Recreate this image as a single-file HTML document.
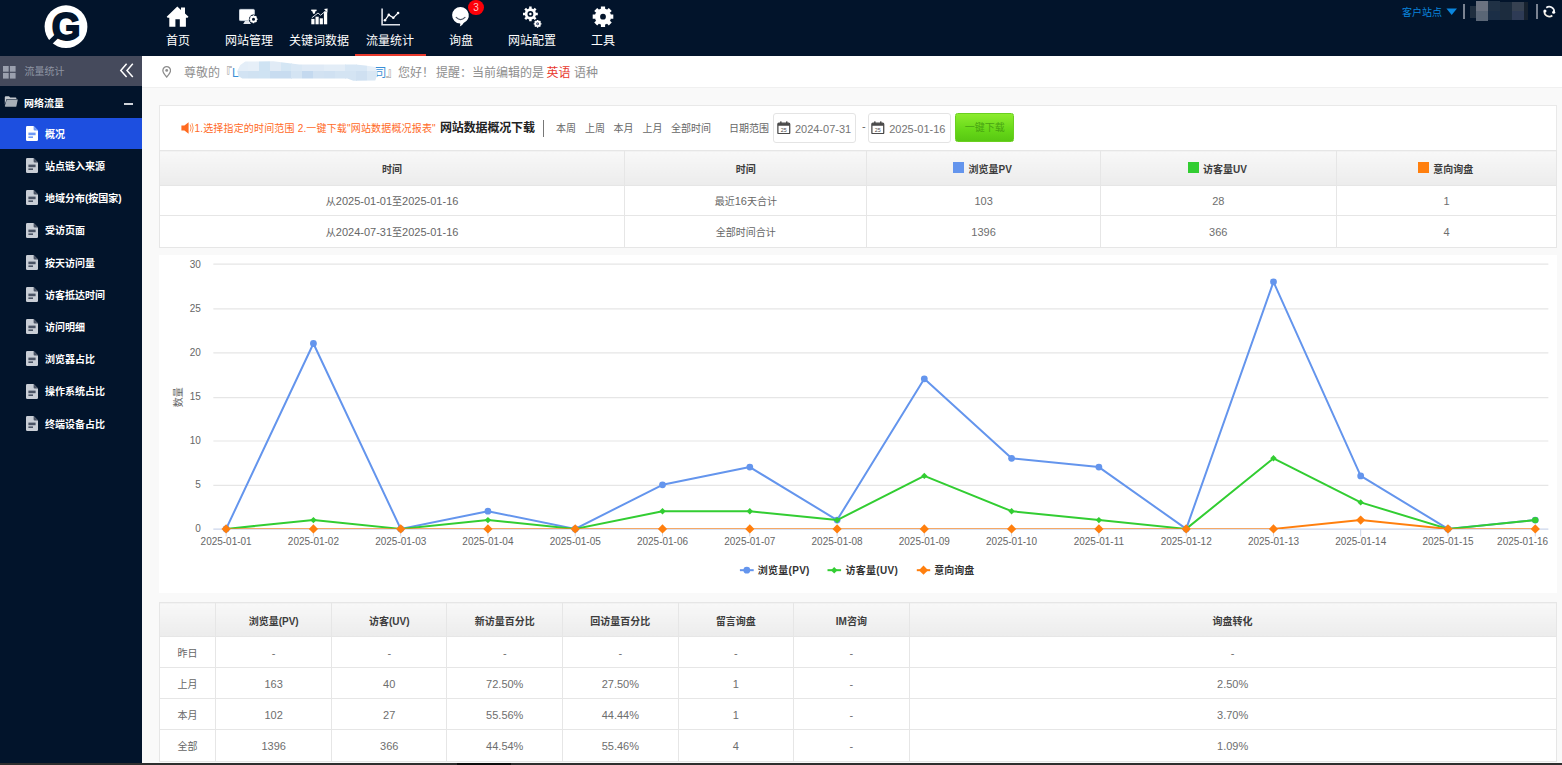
<!DOCTYPE html>
<html lang="zh-CN">
<head>
<meta charset="utf-8">
<title>流量统计 - 概况</title>
<style>
*{box-sizing:border-box;margin:0;padding:0}
html,body{width:1562px;height:765px;overflow:hidden}
body{position:relative;background:#f9f9f9;font-family:"Liberation Sans","Noto Sans CJK SC",sans-serif;font-size:10px;color:#666}
.abs{position:absolute}
#top{position:absolute;left:0;top:0;width:1562px;height:56px;background:#02142b}
#side{position:absolute;left:0;top:56px;width:142px;height:709px;background:#02142b}
#sidehead{position:absolute;left:0;top:0;width:142px;height:30.3px;background:#454a5c}
.nav{position:absolute;top:0;height:56px;color:#fff;font-size:12px;text-align:center;white-space:nowrap}
.nav span{position:absolute;left:50%;transform:translateX(-50%);top:32.8px;line-height:16px}
.nav svg{position:absolute}
.sitem{position:absolute;left:0;width:142px;height:31px;color:#fff;font-size:10px;font-weight:bold}
.sitem span{position:absolute;left:45px;top:0.4px;line-height:31px;white-space:nowrap}
.sitem svg{position:absolute;left:25.5px;top:7.5px}
.sitem.on{background:#1d4fe0}
.sitem.on span{top:1px}
.sitem.on svg{top:8.1px}
#crumb{position:absolute;left:142px;top:56px;width:1420px;height:32px;background:#fff;border-bottom:1px solid #f0f0f0;color:#8e8e8e;font-size:12px}
#crumb span{position:absolute;top:1px;line-height:32px;white-space:nowrap}
#panel{position:absolute;left:159px;top:105px;width:1397.5px;height:142.2px;background:#fff;border:1px solid #e9e9e9}

#pw span{position:absolute;white-space:nowrap;line-height:14px}
.tb{position:absolute;left:0;border-collapse:collapse;table-layout:fixed}
.tb td,.tb th{border:1px solid #e6e6e6;text-align:center;vertical-align:middle;padding:0;font-weight:normal;color:#666;overflow:hidden;white-space:nowrap}
.tb th{font-weight:bold;color:#3d3d3d;background:linear-gradient(#f8f8f8,#ececec);font-size:10px}
.tb td{font-size:10px;background:#fff}
.tb .n{font-size:11px}
.tb td.n{padding-top:1px;color:#6e6e6e}
.tb th{padding-top:1px}
#pw .tb th{padding-top:1.6px}
#pw .tb td{padding-top:0.6px}
.sw{display:inline-block;width:11px;height:11px;vertical-align:0.4px;margin-right:4.4px;margin-left:-2px}
.inp{position:absolute;top:8px;height:30px;width:83px;border:1.5px solid #e4e4e4;border-radius:3px;background:#fff}

</style>
</head>
<body>
<div id="top">
<svg class="abs" style="left:40px;top:0" width="54" height="56" viewBox="40 0 54 56">
 <circle cx="66" cy="26.7" r="21.4" fill="#fff"/>
 <path d="M50.2 42.6 L57.4 35.4" stroke="#02142b" stroke-width="5" fill="none"/>
 <text transform="translate(66.1 0) scale(0.94 1) translate(-66.1 0)" x="66.1" y="40.1" font-family="Liberation Sans, sans-serif" font-weight="bold" font-size="39.2" fill="#02142b" stroke="#02142b" stroke-width="1.9" stroke-linejoin="miter" text-anchor="middle">G</text>
</svg>

<div class="nav" style="left:155px;width:46px">
 <svg style="left:11px;top:5.5px" width="24" height="22" viewBox="0 0 24 22"><path d="M11.3 0.6 L15 3.9 V1.5 H19 V7.5 L22.5 10.7 L21.6 11.7 H19.9 V20.8 H13.8 V13.3 H9.4 V20.8 H3.3 V11.7 H1.6 L0.7 10.7 Z" fill="#fff"/></svg>
 <span>首页</span></div>

<div class="nav" style="left:222px;width:54px">
 <svg style="left:16px;top:8px" width="21" height="17" viewBox="0 0 21 17"><rect x="1.5" y="1.4" width="14.8" height="11.2" rx="0.8" fill="#fff" stroke="#cdd5de" stroke-width="1"/><path d="M7 13.1 H11.4 L12.9 15.9 H5.2 Z" fill="#e4e8ee"/><circle cx="15.5" cy="11.2" r="4.6" fill="#02142b"/><circle cx="15.5" cy="11.2" r="2.5" fill="none" stroke="#fff" stroke-width="1.9"/><g stroke="#fff" stroke-width="1.5"><path d="M15.5 7.2v1.4M15.5 13.8v1.4M11.5 11.2h1.4M18.1 11.2h1.4M12.67 8.37l1 1M17.33 13.03l1 1M18.33 8.37l-1 1M13.67 13.03l-1 1"/></g></svg>
 <span>网站管理</span></div>

<div class="nav" style="left:289px;width:60px">
 <svg style="left:22px;top:8px" width="17" height="17" viewBox="0 0 17 17"><g fill="#fff"><rect x="0.3" y="10.9" width="3.2" height="5.4"/><rect x="4.5" y="8.7" width="3.2" height="7.6"/><rect x="8.7" y="10.3" width="3.2" height="6"/><rect x="12.9" y="3.6" width="3.3" height="12.7"/><rect x="0.2" y="1.6" width="5.4" height="1.5"/><path d="M1.2 3.1 H4.6 L3.7 5.8 H2.1 Z"/></g><path d="M0.8 9.8 L7 5 L9.6 7.2 L15.6 2.2" stroke="#dfe3ea" stroke-width="1" fill="none"/><path d="M13 1 L16.6 0.6 L16.4 4.4 Z" fill="#fff"/></svg>
 <span>关键词数据</span></div>

<div class="nav" style="left:354.5px;width:71px;border-bottom:2px solid #e8392d">
 <svg style="left:26px;top:7.5px" width="20" height="18" viewBox="0 0 20 18"><path d="M1.1 0.4 V16.8 H19" stroke="#dfe3ea" stroke-width="1.6" fill="none"/><path d="M4 12.3 L7.8 6.9 L12.3 9.8 L17.1 5" stroke="#fff" stroke-width="1.2" fill="none"/><g fill="#fff"><circle cx="4" cy="12.3" r="1.3"/><circle cx="7.8" cy="6.9" r="1.3"/><circle cx="12.3" cy="9.8" r="1.3"/><circle cx="17.1" cy="5" r="1.3"/></g></svg>
 <span>流量统计</span></div>

<div class="nav" style="left:438px;width:46px">
 <svg style="left:13px;top:5.5px" width="20" height="21" viewBox="0 0 20 21"><path d="M9.6 1 A8.3 8.3 0 0 1 12.6 17 Q11.6 19.2 8.8 20.4 Q9.6 18.8 9.2 17.6 A8.3 8.3 0 0 1 9.6 1 Z" fill="#fff"/><path d="M5.2 11.4 Q9.6 15.8 14 11.4" stroke="#4a5363" stroke-width="1.2" fill="none" stroke-linecap="round"/></svg>
 <div class="abs" style="left:30.3px;top:-0.4px;width:15.6px;height:15.6px;border-radius:50%;background:#fc0008;color:#ffc4c4;font-size:10px;line-height:15.6px;text-align:center">3</div>
 <span>询盘</span></div>

<div class="nav" style="left:505px;width:54px">
 <svg style="left:17px;top:5.5px" width="21" height="22" viewBox="0 0 21 22"><g transform="translate(8.4 7.9)"><circle r="4.3" fill="none" stroke="#fff" stroke-width="2.7"/><circle r="1.25" fill="#fff"/><g stroke="#fff" stroke-width="2.5"><path d="M0 -7.4v2.6M0 4.8v2.6M-7.4 0h2.6M4.8 0h2.6M-5.23 -5.23l1.84 1.84M3.39 3.39l1.84 1.84M5.23 -5.23l-1.84 1.84M-3.39 3.39l-1.84 1.84"/></g></g><g transform="translate(15.6 17.8)"><circle r="2.3" fill="none" stroke="#fff" stroke-width="1.9"/><circle r="0.9" fill="#9aa0c8"/><g stroke="#fff" stroke-width="1.3"><path d="M0 -3.9v1.2M0 2.7v1.2M-3.9 0h1.2M2.7 0h1.2M-2.76 -2.76l.85 .85M1.9 1.9l.85 .85M2.76 -2.76l-.85 .85M-1.9 1.9l-.85 .85"/></g></g></svg>
 <span>网站配置</span></div>

<div class="nav" style="left:580px;width:46px">
 <svg style="left:12px;top:6px" width="22" height="22" viewBox="0 0 22 22"><g transform="translate(11 10.7)"><circle r="5.5" fill="none" stroke="#fff" stroke-width="5.2"/><g stroke="#fff" stroke-width="4.2"><path d="M0 -10.3v3M0 7.3v3M-10.3 0h3M7.3 0h3M-7.28 -7.28l2.12 2.12M5.16 5.16l2.12 2.12M7.28 -7.28l-2.12 2.12M-5.16 5.16l-2.12 2.12"/></g></g></svg>
 <span>工具</span></div>

<div class="abs" style="left:1402px;top:6.6px;font-size:10px;line-height:12px;color:#0a84dc;white-space:nowrap">客户站点</div>
<svg class="abs" style="left:1446px;top:8px" width="12" height="8" viewBox="0 0 12 8"><path d="M0.4 0.4 H11 L5.7 7 Z" fill="#0a86de"/></svg>
<div class="abs" style="left:1463.2px;top:3.5px;width:1.8px;height:15.5px;background:#7a8392"></div>
<div class="abs" style="left:1470px;top:6px;width:6px;height:12px;background:#1f2e3f"></div>
<div class="abs" style="left:1476px;top:1.2px;width:12px;height:10px;background:#6b7280"></div>
<div class="abs" style="left:1476px;top:11.2px;width:12px;height:9.5px;background:#5a6676"></div>
<div class="abs" style="left:1488px;top:1.2px;width:12px;height:10px;background:#203145"></div>
<div class="abs" style="left:1488px;top:11.2px;width:12px;height:9px;background:#1b2e46"></div>
<div class="abs" style="left:1500px;top:1.5px;width:12px;height:18px;background:#1c2c3e"></div>
<div class="abs" style="left:1512px;top:2px;width:12px;height:9.2px;background:#364151"></div>
<div class="abs" style="left:1512px;top:11.2px;width:12px;height:8.4px;background:#2e3b55"></div>
<div class="abs" style="left:1524px;top:2px;width:4px;height:17.5px;background:#17222f"></div>
<div class="abs" style="left:1536px;top:3.5px;width:1.8px;height:15.5px;background:#7a8392"></div>
<svg class="abs" style="left:1541px;top:4px" width="17" height="15" viewBox="1541 4 17 15"><path d="M1546.28 7.74 A4.9 4.9 0 0 1 1554.20 11.77" stroke="#f3f5f8" stroke-width="1.7" fill="none"/><path d="M1552.32 15.46 A4.9 4.9 0 0 1 1544.40 11.43" stroke="#f1ece4" stroke-width="1.7" fill="none"/><circle cx="1553.66" cy="12.21" r="1.55" fill="#fff"/><circle cx="1544.94" cy="10.99" r="1.55" fill="#fff"/></svg>
</div>
<div id="side"><div id="sidehead"><svg class="abs" style="left:3px;top:9.5px" width="13" height="13" viewBox="0 0 13 13"><g fill="#9ba0ae"><rect x="0" y="0" width="5.7" height="5.7"/><rect x="6.9" y="0" width="5.7" height="5.7"/><rect x="0" y="6.9" width="5.7" height="5.7"/><rect x="6.9" y="6.9" width="5.7" height="5.7"/></g></svg><div class="abs" style="left:24.5px;top:0;line-height:31px;font-size:10px;color:#8f95a3;white-space:nowrap">流量统计</div><svg class="abs" style="left:119px;top:7px" width="16" height="15" viewBox="0 0 16 15"><path d="M7.6 0.8 L1.8 7.4 L7.6 14 M13.8 0.8 L8 7.4 L13.8 14" stroke="#fff" stroke-width="1.5" fill="none"/></svg></div>
<svg class="abs" style="left:3.8px;top:40.2px" width="14" height="11" viewBox="0 0 14 11"><path d="M0.8 1.2 Q0.8 0.2 1.8 0.2 H5 L6.2 1.4 H11.6 Q12.4 1.4 12.4 2.2 V3 H2.6 L0.8 8.6 Z" fill="#c5cad0"/><path d="M2.8 3.6 H13.8 L12.4 10.2 Q12.2 10.8 11.6 10.8 H1.6 Q0.6 10.8 0.9 9.8 Z" fill="#a7afb7"/></svg><div class="abs" style="left:24px;top:31.9px;line-height:32px;font-size:10px;font-weight:bold;color:#fff;white-space:nowrap">网络流量</div><div class="abs" style="left:124.2px;top:46.6px;width:9.2px;height:2px;background:#cfd3da"></div>
<div class="sitem on" style="top:61.9px;height:31.2px"><svg width="12" height="15" viewBox="0 0 12 15"><path d="M1.2 0 H7.6 L12 4.4 V13.8 Q12 15 10.8 15 H1.2 Q0 15 0 13.8 V1.2 Q0 0 1.2 0 Z" fill="#fff"/><path d="M7.6 0 L12 4.4 H8.6 Q7.6 4.4 7.6 3.4 Z" fill="#6f9af5"/><rect x="2.4" y="6.6" width="7.2" height="2.6" fill="#6f9af5"/><rect x="2.4" y="10.4" width="4.6" height="1.6" fill="#6f9af5"/></svg><span>概况</span></div>
<div class="sitem" style="top:94.7px"><svg width="12" height="15" viewBox="0 0 12 15"><path d="M1.2 0 H7.6 L12 4.4 V13.8 Q12 15 10.8 15 H1.2 Q0 15 0 13.8 V1.2 Q0 0 1.2 0 Z" fill="#c9ced6"/><path d="M7.6 0 L12 4.4 H8.6 Q7.6 4.4 7.6 3.4 Z" fill="#4a5364"/><rect x="2.4" y="6.6" width="7.2" height="2.6" fill="#4a5364"/><rect x="2.4" y="10.4" width="4.6" height="1.6" fill="#4a5364"/></svg><span>站点链入来源</span></div>
<div class="sitem" style="top:126.9px"><svg width="12" height="15" viewBox="0 0 12 15"><path d="M1.2 0 H7.6 L12 4.4 V13.8 Q12 15 10.8 15 H1.2 Q0 15 0 13.8 V1.2 Q0 0 1.2 0 Z" fill="#c9ced6"/><path d="M7.6 0 L12 4.4 H8.6 Q7.6 4.4 7.6 3.4 Z" fill="#4a5364"/><rect x="2.4" y="6.6" width="7.2" height="2.6" fill="#4a5364"/><rect x="2.4" y="10.4" width="4.6" height="1.6" fill="#4a5364"/></svg><span>地域分布(按国家)</span></div>
<div class="sitem" style="top:159.1px"><svg width="12" height="15" viewBox="0 0 12 15"><path d="M1.2 0 H7.6 L12 4.4 V13.8 Q12 15 10.8 15 H1.2 Q0 15 0 13.8 V1.2 Q0 0 1.2 0 Z" fill="#c9ced6"/><path d="M7.6 0 L12 4.4 H8.6 Q7.6 4.4 7.6 3.4 Z" fill="#4a5364"/><rect x="2.4" y="6.6" width="7.2" height="2.6" fill="#4a5364"/><rect x="2.4" y="10.4" width="4.6" height="1.6" fill="#4a5364"/></svg><span>受访页面</span></div>
<div class="sitem" style="top:191.3px"><svg width="12" height="15" viewBox="0 0 12 15"><path d="M1.2 0 H7.6 L12 4.4 V13.8 Q12 15 10.8 15 H1.2 Q0 15 0 13.8 V1.2 Q0 0 1.2 0 Z" fill="#c9ced6"/><path d="M7.6 0 L12 4.4 H8.6 Q7.6 4.4 7.6 3.4 Z" fill="#4a5364"/><rect x="2.4" y="6.6" width="7.2" height="2.6" fill="#4a5364"/><rect x="2.4" y="10.4" width="4.6" height="1.6" fill="#4a5364"/></svg><span>按天访问量</span></div>
<div class="sitem" style="top:223.5px"><svg width="12" height="15" viewBox="0 0 12 15"><path d="M1.2 0 H7.6 L12 4.4 V13.8 Q12 15 10.8 15 H1.2 Q0 15 0 13.8 V1.2 Q0 0 1.2 0 Z" fill="#c9ced6"/><path d="M7.6 0 L12 4.4 H8.6 Q7.6 4.4 7.6 3.4 Z" fill="#4a5364"/><rect x="2.4" y="6.6" width="7.2" height="2.6" fill="#4a5364"/><rect x="2.4" y="10.4" width="4.6" height="1.6" fill="#4a5364"/></svg><span>访客抵达时间</span></div>
<div class="sitem" style="top:255.7px"><svg width="12" height="15" viewBox="0 0 12 15"><path d="M1.2 0 H7.6 L12 4.4 V13.8 Q12 15 10.8 15 H1.2 Q0 15 0 13.8 V1.2 Q0 0 1.2 0 Z" fill="#c9ced6"/><path d="M7.6 0 L12 4.4 H8.6 Q7.6 4.4 7.6 3.4 Z" fill="#4a5364"/><rect x="2.4" y="6.6" width="7.2" height="2.6" fill="#4a5364"/><rect x="2.4" y="10.4" width="4.6" height="1.6" fill="#4a5364"/></svg><span>访问明细</span></div>
<div class="sitem" style="top:287.9px"><svg width="12" height="15" viewBox="0 0 12 15"><path d="M1.2 0 H7.6 L12 4.4 V13.8 Q12 15 10.8 15 H1.2 Q0 15 0 13.8 V1.2 Q0 0 1.2 0 Z" fill="#c9ced6"/><path d="M7.6 0 L12 4.4 H8.6 Q7.6 4.4 7.6 3.4 Z" fill="#4a5364"/><rect x="2.4" y="6.6" width="7.2" height="2.6" fill="#4a5364"/><rect x="2.4" y="10.4" width="4.6" height="1.6" fill="#4a5364"/></svg><span>浏览器占比</span></div>
<div class="sitem" style="top:320.1px"><svg width="12" height="15" viewBox="0 0 12 15"><path d="M1.2 0 H7.6 L12 4.4 V13.8 Q12 15 10.8 15 H1.2 Q0 15 0 13.8 V1.2 Q0 0 1.2 0 Z" fill="#c9ced6"/><path d="M7.6 0 L12 4.4 H8.6 Q7.6 4.4 7.6 3.4 Z" fill="#4a5364"/><rect x="2.4" y="6.6" width="7.2" height="2.6" fill="#4a5364"/><rect x="2.4" y="10.4" width="4.6" height="1.6" fill="#4a5364"/></svg><span>操作系统占比</span></div>
<div class="sitem" style="top:352.3px"><svg width="12" height="15" viewBox="0 0 12 15"><path d="M1.2 0 H7.6 L12 4.4 V13.8 Q12 15 10.8 15 H1.2 Q0 15 0 13.8 V1.2 Q0 0 1.2 0 Z" fill="#c9ced6"/><path d="M7.6 0 L12 4.4 H8.6 Q7.6 4.4 7.6 3.4 Z" fill="#4a5364"/><rect x="2.4" y="6.6" width="7.2" height="2.6" fill="#4a5364"/><rect x="2.4" y="10.4" width="4.6" height="1.6" fill="#4a5364"/></svg><span>终端设备占比</span></div>
</div>
<div id="crumb">
<svg class="abs" style="left:19.6px;top:10.2px" width="9.4" height="11.6" viewBox="0 0 10 12.4"><path d="M5 0.7 A4.1 4.1 0 0 1 9.1 4.8 Q9.1 7.2 5 11.8 Q0.9 7.2 0.9 4.8 A4.1 4.1 0 0 1 5 0.7 Z" fill="none" stroke="#8d8d8d" stroke-width="1.4"/><circle cx="5" cy="4.7" r="1.5" fill="#8d8d8d"/></svg>
<span style="left:42px">尊敬的『</span>
<span style="left:90px;color:#3b8fd6">L'</span>
<span style="left:232.6px;color:#3b8fd6">司</span>
<div class="abs" style="left:95.3px;top:5px;width:140.6px;height:20px;clip-path:polygon(0 10px,3px 4px,8px 0.6px,36px 0.2px,50px 2px,62px 3.6px,118px 3.6px,128px 4.5px,138px 6px,140.6px 12px,138px 19.5px,116px 19.8px,110px 17.6px,5px 17.4px,1px 15px)"><div class="abs" style="left:0.00px;top:0;width:11.12px;height:10px;background:#e4eef8"></div><div class="abs" style="left:0.00px;top:10px;width:11.12px;height:10px;background:#d2e3f3"></div><div class="abs" style="left:10.82px;top:0;width:11.12px;height:10px;background:#e6eff8"></div><div class="abs" style="left:10.82px;top:10px;width:11.12px;height:10px;background:#d0e2f2"></div><div class="abs" style="left:21.63px;top:0;width:11.12px;height:10px;background:#cfe3f3"></div><div class="abs" style="left:21.63px;top:10px;width:11.12px;height:10px;background:#cfe3f3"></div><div class="abs" style="left:32.45px;top:0;width:11.12px;height:10px;background:#e1ebf6"></div><div class="abs" style="left:32.45px;top:10px;width:11.12px;height:10px;background:#c8dcf0"></div><div class="abs" style="left:43.26px;top:0;width:11.12px;height:10px;background:#d4e6f4"></div><div class="abs" style="left:43.26px;top:10px;width:11.12px;height:10px;background:#c8dcf0"></div><div class="abs" style="left:54.08px;top:0;width:11.12px;height:10px;background:#dae8f5"></div><div class="abs" style="left:54.08px;top:10px;width:11.12px;height:10px;background:#d4e4f3"></div><div class="abs" style="left:64.89px;top:0;width:11.12px;height:10px;background:#dfeaf6"></div><div class="abs" style="left:64.89px;top:10px;width:11.12px;height:10px;background:#c4d9ef"></div><div class="abs" style="left:75.71px;top:0;width:11.12px;height:10px;background:#dfeaf6"></div><div class="abs" style="left:75.71px;top:10px;width:11.12px;height:10px;background:#d2e2f2"></div><div class="abs" style="left:86.52px;top:0;width:11.12px;height:10px;background:#e3edf7"></div><div class="abs" style="left:86.52px;top:10px;width:11.12px;height:10px;background:#d0e1f2"></div><div class="abs" style="left:97.34px;top:0;width:11.12px;height:10px;background:#e3edf7"></div><div class="abs" style="left:97.34px;top:10px;width:11.12px;height:10px;background:#d4e4f3"></div><div class="abs" style="left:108.15px;top:0;width:11.12px;height:10px;background:#d8e7f5"></div><div class="abs" style="left:108.15px;top:10px;width:11.12px;height:10px;background:#d4e4f3"></div><div class="abs" style="left:118.97px;top:0;width:11.12px;height:10px;background:#d8e7f5"></div><div class="abs" style="left:118.97px;top:10px;width:11.12px;height:10px;background:#cfe0f1"></div><div class="abs" style="left:129.78px;top:0;width:11.12px;height:10px;background:#e6eff8"></div><div class="abs" style="left:129.78px;top:10px;width:11.12px;height:10px;background:#d9e7f4"></div></div>
<span style="left:244px">』您好！</span>
<span style="left:294px">提醒：当前编辑的是</span>
<span style="left:404.5px;color:#e8392d">英语</span>
<span style="left:432px">语种</span>
</div>
<div id="panel"><div class="abs" id="pw" style="left:-1px;top:-0.7px;width:1397.5px;height:142px">
<svg class="abs" style="left:21.5px;top:17px" width="14" height="12" viewBox="0 0 14 12"><path d="M0.4 3.6 H3.4 L7.6 0.2 V11.8 L3.4 8.4 H0.4 Z" fill="#ff6a1f"/><path d="M9.2 2.6 Q11 6 9.2 9.4 M11 1.2 Q13.4 6 11 10.8" stroke="#ff8a4d" stroke-width="0.9" fill="none"/></svg>
<span style="left:35.5px;top:16.5px;color:#ff6a1f;font-size:10px;letter-spacing:0.17px">1.选择指定的时间范围 2.一键下载"网站数据概况报表"</span>
<span style="left:281px;top:15.5px;color:#222;font-size:12px;font-weight:bold;letter-spacing:-0.15px">网站数据概况下载</span>
<div class="abs" style="left:384px;top:14.5px;width:1.3px;height:17px;background:#777"></div>
<span style="left:397px;top:16.5px">本周</span>
<span style="left:426px;top:16.5px">上周</span>
<span style="left:454.5px;top:16.5px">本月</span>
<span style="left:483.5px;top:16.5px">上月</span>
<span style="left:512px;top:16.5px">全部时间</span>
<span style="left:570px;top:16.5px">日期范围</span>
<div class="inp" style="left:614.4px"><svg class="abs" style="left:2.8px;top:6.2px" width="13.6" height="13.6" viewBox="0 0 14 14"><rect x="0.9" y="2.3" width="12.2" height="10.8" rx="1" fill="#fff" stroke="#4a4a4a" stroke-width="1.3"/><rect x="0.9" y="2.3" width="12.2" height="2.6" fill="#4a4a4a"/><rect x="3.2" y="0.4" width="1.5" height="3" fill="#4a4a4a"/><rect x="9.3" y="0.4" width="1.5" height="3" fill="#4a4a4a"/><text x="7" y="11.4" font-size="5.5" font-family="Liberation Sans, sans-serif" fill="#4a4a4a" text-anchor="middle">25</text></svg><span style="left:20.5px;top:7.5px;font-size:11px;color:#747474">2024-07-31</span></div>
<span style="left:703px;top:13.7px;font-size:11px">-</span>
<div class="inp" style="left:708.7px"><svg class="abs" style="left:2.8px;top:6.2px" width="13.6" height="13.6" viewBox="0 0 14 14"><rect x="0.9" y="2.3" width="12.2" height="10.8" rx="1" fill="#fff" stroke="#4a4a4a" stroke-width="1.3"/><rect x="0.9" y="2.3" width="12.2" height="2.6" fill="#4a4a4a"/><rect x="3.2" y="0.4" width="1.5" height="3" fill="#4a4a4a"/><rect x="9.3" y="0.4" width="1.5" height="3" fill="#4a4a4a"/><text x="7" y="11.4" font-size="5.5" font-family="Liberation Sans, sans-serif" fill="#4a4a4a" text-anchor="middle">25</text></svg><span style="left:20.5px;top:7.5px;font-size:11px;color:#747474">2025-01-16</span></div>
<div class="abs" style="left:796px;top:8px;width:59.4px;height:29px;border-radius:2.5px;background:linear-gradient(#8cec2e,#66d818 60%,#58c812);border:1px solid #6ad020;text-align:center;line-height:28.5px;font-size:10px;color:#48a412">一键下载</div>
<table class="tb" style="top:44.8px;left:0;width:1397.5px">
<colgroup><col style="width:465.2px"><col style="width:242.3px"><col style="width:233.2px"><col style="width:236.2px"><col style="width:220.6px"></colgroup>
<tr style="height:34.4px"><th>时间</th><th>时间</th><th><i class="sw" style="background:#6495ed"></i>浏览量PV</th><th><i class="sw" style="background:#32cd32"></i>访客量UV</th><th><i class="sw" style="background:#ff7f0e"></i>意向询盘</th></tr>
<tr style="height:30.9px"><td><span style="position:static;font-size:10px">从</span><span style="position:static" class="n">2025-01-01</span>至<span style="position:static" class="n">2025-01-16</span></td><td>最近<span style="position:static" class="n">16</span>天合计</td><td class="n">103</td><td class="n">28</td><td class="n">1</td></tr>
<tr style="height:31.2px"><td>从<span style="position:static" class="n">2024-07-31</span>至<span style="position:static" class="n">2025-01-16</span></td><td>全部时间合计</td><td class="n">1396</td><td class="n">366</td><td class="n">4</td></tr>
</table>
</div></div>
<svg id="chart" class="abs" style="left:158.5px;top:255.0px;background:#fff" width="1398.5" height="338.2" viewBox="0 0 1398.5 338.2" font-family="Liberation Sans, Noto Sans CJK SC, sans-serif">
<defs><clipPath id="pc"><rect x="0" y="0" width="1398.5" height="274.0"/></clipPath></defs>
<path d="M54.3 9.1H1389.4" stroke="#e6e6e6" stroke-width="1.2"/><text x="41.9" y="13.4" font-size="10" fill="#666" text-anchor="end">30</text>
<path d="M54.3 53.8H1389.4" stroke="#e6e6e6" stroke-width="1.2"/><text x="41.9" y="57.4" font-size="10" fill="#666" text-anchor="end">25</text>
<path d="M54.3 97.8H1389.4" stroke="#e6e6e6" stroke-width="1.2"/><text x="41.9" y="101.0" font-size="10" fill="#666" text-anchor="end">20</text>
<path d="M54.3 142.6H1389.4" stroke="#e6e6e6" stroke-width="1.2"/><text x="41.9" y="145.0" font-size="10" fill="#666" text-anchor="end">15</text>
<path d="M54.3 186.0H1389.4" stroke="#e6e6e6" stroke-width="1.2"/><text x="41.9" y="188.9" font-size="10" fill="#666" text-anchor="end">10</text>
<path d="M54.3 230.3H1389.4" stroke="#e6e6e6" stroke-width="1.2"/><text x="41.9" y="232.8" font-size="10" fill="#666" text-anchor="end">5</text>
<text x="41.9" y="277.4" font-size="10" fill="#666" text-anchor="end">0</text>
<path d="M54.3 274.2H1389.4" stroke="#ccd6eb" stroke-width="1.2"/>
<path d="M67.1 273.9v7.5" stroke="#ccd6eb" stroke-width="1"/><path d="M154.4 273.9v7.5" stroke="#ccd6eb" stroke-width="1"/><path d="M241.7 273.9v7.5" stroke="#ccd6eb" stroke-width="1"/><path d="M328.9 273.9v7.5" stroke="#ccd6eb" stroke-width="1"/><path d="M416.2 273.9v7.5" stroke="#ccd6eb" stroke-width="1"/><path d="M503.5 273.9v7.5" stroke="#ccd6eb" stroke-width="1"/><path d="M590.8 273.9v7.5" stroke="#ccd6eb" stroke-width="1"/><path d="M678.1 273.9v7.5" stroke="#ccd6eb" stroke-width="1"/><path d="M765.3 273.9v7.5" stroke="#ccd6eb" stroke-width="1"/><path d="M852.6 273.9v7.5" stroke="#ccd6eb" stroke-width="1"/><path d="M939.9 273.9v7.5" stroke="#ccd6eb" stroke-width="1"/><path d="M1027.2 273.9v7.5" stroke="#ccd6eb" stroke-width="1"/><path d="M1114.5 273.9v7.5" stroke="#ccd6eb" stroke-width="1"/><path d="M1201.7 273.9v7.5" stroke="#ccd6eb" stroke-width="1"/><path d="M1289.0 273.9v7.5" stroke="#ccd6eb" stroke-width="1"/><path d="M1376.3 273.9v7.5" stroke="#ccd6eb" stroke-width="1"/>
<text x="19.9" y="142.3" font-size="10" fill="#666" text-anchor="middle" transform="rotate(-90 19.9 142.3)" dy="3.5">数量</text>
<text x="67.1" y="290.5" font-size="10" fill="#666" text-anchor="middle">2025-01-01</text><text x="154.4" y="290.5" font-size="10" fill="#666" text-anchor="middle">2025-01-02</text><text x="241.7" y="290.5" font-size="10" fill="#666" text-anchor="middle">2025-01-03</text><text x="328.9" y="290.5" font-size="10" fill="#666" text-anchor="middle">2025-01-04</text><text x="416.2" y="290.5" font-size="10" fill="#666" text-anchor="middle">2025-01-05</text><text x="503.5" y="290.5" font-size="10" fill="#666" text-anchor="middle">2025-01-06</text><text x="590.8" y="290.5" font-size="10" fill="#666" text-anchor="middle">2025-01-07</text><text x="678.1" y="290.5" font-size="10" fill="#666" text-anchor="middle">2025-01-08</text><text x="765.3" y="290.5" font-size="10" fill="#666" text-anchor="middle">2025-01-09</text><text x="852.6" y="290.5" font-size="10" fill="#666" text-anchor="middle">2025-01-10</text><text x="939.9" y="290.5" font-size="10" fill="#666" text-anchor="middle">2025-01-11</text><text x="1027.2" y="290.5" font-size="10" fill="#666" text-anchor="middle">2025-01-12</text><text x="1114.5" y="290.5" font-size="10" fill="#666" text-anchor="middle">2025-01-13</text><text x="1201.7" y="290.5" font-size="10" fill="#666" text-anchor="middle">2025-01-14</text><text x="1289.0" y="290.5" font-size="10" fill="#666" text-anchor="middle">2025-01-15</text><text x="1389.2" y="290.5" font-size="10" fill="#666" text-anchor="end">2025-01-16</text>
<polyline clip-path="url(#pc)" points="67.1,273.9 154.4,88.5 241.7,273.9 328.9,256.2 416.2,273.9 503.5,229.8 590.8,212.1 678.1,265.1 765.3,123.8 852.6,203.3 939.9,212.1 1027.2,273.9 1114.5,26.8 1201.7,220.9 1289.0,273.9 1376.3,265.1" fill="none" stroke="#6495ed" stroke-width="2" stroke-linejoin="round" stroke-linecap="round"/>
<circle cx="67.1" cy="273.9" r="3.4" fill="#6495ed"/><circle cx="154.4" cy="88.5" r="3.4" fill="#6495ed"/><circle cx="241.7" cy="273.9" r="3.4" fill="#6495ed"/><circle cx="328.9" cy="256.2" r="3.4" fill="#6495ed"/><circle cx="416.2" cy="273.9" r="3.4" fill="#6495ed"/><circle cx="503.5" cy="229.8" r="3.4" fill="#6495ed"/><circle cx="590.8" cy="212.1" r="3.4" fill="#6495ed"/><circle cx="678.1" cy="265.1" r="3.4" fill="#6495ed"/><circle cx="765.3" cy="123.8" r="3.4" fill="#6495ed"/><circle cx="852.6" cy="203.3" r="3.4" fill="#6495ed"/><circle cx="939.9" cy="212.1" r="3.4" fill="#6495ed"/><circle cx="1027.2" cy="273.9" r="3.4" fill="#6495ed"/><circle cx="1114.5" cy="26.8" r="3.4" fill="#6495ed"/><circle cx="1201.7" cy="220.9" r="3.4" fill="#6495ed"/><circle cx="1289.0" cy="273.9" r="3.4" fill="#6495ed"/><circle cx="1376.3" cy="265.1" r="3.4" fill="#6495ed"/>
<polyline clip-path="url(#pc)" points="67.1,273.9 154.4,265.1 241.7,273.9 328.9,265.1 416.2,273.9 503.5,256.2 590.8,256.2 678.1,265.1 765.3,220.9 852.6,256.2 939.9,265.1 1027.2,273.9 1114.5,203.3 1201.7,247.4 1289.0,273.9 1376.3,265.1" fill="none" stroke="#32cd32" stroke-width="2" stroke-linejoin="round" stroke-linecap="round"/>
<path d="M67.1 270.7l3.2 3.2l-3.2 3.2l-3.2-3.2z" fill="#32cd32"/><path d="M154.4 261.9l3.2 3.2l-3.2 3.2l-3.2-3.2z" fill="#32cd32"/><path d="M241.7 270.7l3.2 3.2l-3.2 3.2l-3.2-3.2z" fill="#32cd32"/><path d="M328.9 261.9l3.2 3.2l-3.2 3.2l-3.2-3.2z" fill="#32cd32"/><path d="M416.2 270.7l3.2 3.2l-3.2 3.2l-3.2-3.2z" fill="#32cd32"/><path d="M503.5 253.0l3.2 3.2l-3.2 3.2l-3.2-3.2z" fill="#32cd32"/><path d="M590.8 253.0l3.2 3.2l-3.2 3.2l-3.2-3.2z" fill="#32cd32"/><path d="M678.1 261.9l3.2 3.2l-3.2 3.2l-3.2-3.2z" fill="#32cd32"/><path d="M765.3 217.7l3.2 3.2l-3.2 3.2l-3.2-3.2z" fill="#32cd32"/><path d="M852.6 253.0l3.2 3.2l-3.2 3.2l-3.2-3.2z" fill="#32cd32"/><path d="M939.9 261.9l3.2 3.2l-3.2 3.2l-3.2-3.2z" fill="#32cd32"/><path d="M1027.2 270.7l3.2 3.2l-3.2 3.2l-3.2-3.2z" fill="#32cd32"/><path d="M1114.5 200.1l3.2 3.2l-3.2 3.2l-3.2-3.2z" fill="#32cd32"/><path d="M1201.7 244.2l3.2 3.2l-3.2 3.2l-3.2-3.2z" fill="#32cd32"/><path d="M1289.0 270.7l3.2 3.2l-3.2 3.2l-3.2-3.2z" fill="#32cd32"/><circle cx="1376.3" cy="265.1" r="3.2" fill="#32cd32"/>
<polyline clip-path="url(#pc)" points="67.1,273.9 154.4,273.9 241.7,273.9 328.9,273.9 416.2,273.9 503.5,273.9 590.8,273.9 678.1,273.9 765.3,273.9 852.6,273.9 939.9,273.9 1027.2,273.9 1114.5,273.9" fill="none" stroke="#ff7f0e" stroke-width="2" stroke-linejoin="round" stroke-linecap="round" stroke-opacity="0.62"/>
<polyline clip-path="url(#pc)" points="1289.0,273.9 1376.3,273.9" fill="none" stroke="#ff7f0e" stroke-width="2" stroke-linejoin="round" stroke-linecap="round" stroke-opacity="0.62"/>
<polyline clip-path="url(#pc)" points="1114.5,273.9 1201.7,265.1 1289.0,273.9" fill="none" stroke="#ff7f0e" stroke-width="2" stroke-linejoin="round" stroke-linecap="round"/>
<path d="M67.1 269.3l4.6 4.6l-4.6 4.6l-4.6-4.6z" fill="#ff7f0e"/><path d="M154.4 269.3l4.6 4.6l-4.6 4.6l-4.6-4.6z" fill="#ff7f0e"/><path d="M241.7 269.3l4.6 4.6l-4.6 4.6l-4.6-4.6z" fill="#ff7f0e"/><path d="M328.9 269.3l4.6 4.6l-4.6 4.6l-4.6-4.6z" fill="#ff7f0e"/><path d="M416.2 269.3l4.6 4.6l-4.6 4.6l-4.6-4.6z" fill="#ff7f0e"/><path d="M503.5 269.3l4.6 4.6l-4.6 4.6l-4.6-4.6z" fill="#ff7f0e"/><path d="M590.8 269.3l4.6 4.6l-4.6 4.6l-4.6-4.6z" fill="#ff7f0e"/><path d="M678.1 269.3l4.6 4.6l-4.6 4.6l-4.6-4.6z" fill="#ff7f0e"/><path d="M765.3 269.3l4.6 4.6l-4.6 4.6l-4.6-4.6z" fill="#ff7f0e"/><path d="M852.6 269.3l4.6 4.6l-4.6 4.6l-4.6-4.6z" fill="#ff7f0e"/><path d="M939.9 269.3l4.6 4.6l-4.6 4.6l-4.6-4.6z" fill="#ff7f0e"/><path d="M1027.2 269.3l4.6 4.6l-4.6 4.6l-4.6-4.6z" fill="#ff7f0e"/><path d="M1114.5 269.3l4.6 4.6l-4.6 4.6l-4.6-4.6z" fill="#ff7f0e"/><path d="M1201.7 260.5l4.6 4.6l-4.6 4.6l-4.6-4.6z" fill="#ff7f0e"/><path d="M1289.0 269.3l4.6 4.6l-4.6 4.6l-4.6-4.6z" fill="#ff7f0e"/><path d="M1376.3 269.3l4.6 4.6l-4.6 4.6l-4.6-4.6z" fill="#ff7f0e"/>
<path d="M580.9 315.2H594.7" stroke="#6495ed" stroke-width="2"/><circle cx="587.8" cy="315.2" r="3.4" fill="#6495ed"/><text x="598.7" y="318.8" font-size="10" font-weight="bold" fill="#333" letter-spacing="0.3">浏览量(PV)</text>
<path d="M668.5 315.2H682.1" stroke="#32cd32" stroke-width="2"/><path d="M675.2 312.0l3.2 3.2l-3.2 3.2l-3.2-3.2z" fill="#32cd32"/><text x="686.5" y="318.8" font-size="10" font-weight="bold" fill="#333" letter-spacing="0.3">访客量(UV)</text>
<path d="M757.8 315.2H771.2" stroke="#ff7f0e" stroke-width="2"/><path d="M764.5 310.6l4.6 4.6l-4.6 4.6l-4.6-4.6z" fill="#ff7f0e"/><text x="775.3" y="318.8" font-size="10" font-weight="bold" fill="#333">意向询盘</text>
</svg>
<table class="tb" id="t2" style="left:158.6px;top:602.1px;width:1397.5px">
<colgroup><col style="width:56.8px"><col style="width:115.56px"><col style="width:115.56px"><col style="width:115.56px"><col style="width:115.56px"><col style="width:115.56px"><col style="width:115.56px"><col style="width:646.9px"></colgroup>
<tr style="height:34.2px"><th></th><th>浏览量(PV)</th><th>访客(UV)</th><th>新访量百分比</th><th>回访量百分比</th><th>留言询盘</th><th>IM咨询</th><th>询盘转化</th></tr>
<tr style="height:30.9px"><td>昨日</td><td class="n">-</td><td class="n">-</td><td class="n">-</td><td class="n">-</td><td class="n">-</td><td class="n">-</td><td class="n">-</td></tr>
<tr style="height:30.9px"><td>上月</td><td class="n">163</td><td class="n">40</td><td class="n">72.50%</td><td class="n">27.50%</td><td class="n">1</td><td class="n">-</td><td class="n">2.50%</td></tr>
<tr style="height:30.9px"><td>本月</td><td class="n">102</td><td class="n">27</td><td class="n">55.56%</td><td class="n">44.44%</td><td class="n">1</td><td class="n">-</td><td class="n">3.70%</td></tr>
<tr style="height:31.6px"><td>全部</td><td class="n">1396</td><td class="n">366</td><td class="n">44.54%</td><td class="n">55.46%</td><td class="n">4</td><td class="n">-</td><td class="n">1.09%</td></tr>
</table>
<div class="abs" style="left:0;top:763px;width:1562px;height:2px;background:#2e2e2e"></div><div class="abs" style="left:457px;top:763px;width:54px;height:2px;background:#0c0c0c"></div>
</body>
</html>
